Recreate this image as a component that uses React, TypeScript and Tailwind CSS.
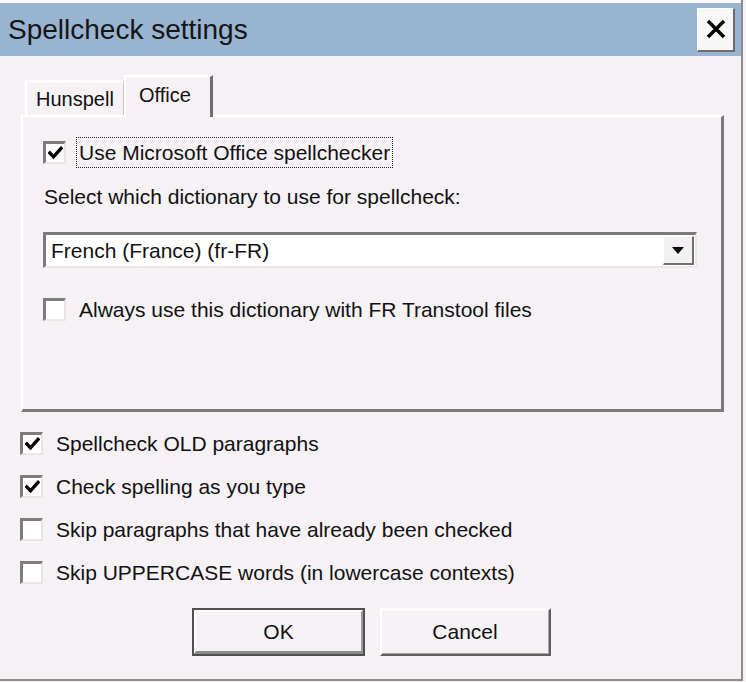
import React from "react";

function Check() {
  return (
    <svg width="15" height="14" viewBox="0 0 15 14">
      <path d="M1.8 7 L5.5 10.8 L13 2.5" fill="none" stroke="#000" strokeWidth="3.4" strokeLinecap="square" />
    </svg>
  );
}

function Box({ checked }: { checked?: boolean }) {
  return (
    <div className="w-[23px] h-[23px] shrink-0 border-t-[3px] border-l-[3px] border-r-2 border-b-2 border-t-[#7d7d7d] border-l-[#7d7d7d] border-r-[#e6e6e6] border-b-[#e6e6e6] bg-white flex items-center justify-center">
      {checked ? <Check /> : null}
    </div>
  );
}

function CheckRow({ checked, label, focus }: { checked?: boolean; label: string; focus?: boolean }) {
  return (
    <div className="flex items-center h-[32px]">
      <Box checked={checked} />
      {focus ? (
        <div className="ml-[10px] border border-dotted border-[#222] px-[2px] h-[31px] flex items-center">
          <span className="whitespace-nowrap">{label}</span>
        </div>
      ) : (
        <span className="ml-[13px] whitespace-nowrap">{label}</span>
      )}
    </div>
  );
}

export default function App() {
  return (
    <div className="w-[746px] h-[682px] bg-[#f5f1f5] overflow-hidden text-[21px] text-[#111] font-['Liberation_Sans',Arial,sans-serif] leading-none">
      <div className="w-[743px] h-[681px] border-r-2 border-b-2 border-r-[#8c8c8c] border-b-[#8c8c8c] flex flex-col">
        {/* title bar */}
        <div className="border-t-[3px] border-t-[#fbfbfb]">
          <div className="h-[53px] bg-[#99b4d1] flex items-center pl-[8px] pr-[6px]">
            <span className="text-[28px] text-[#151515]">Spellcheck settings</span>
            <div className="ml-auto w-[38px] h-[44px] bg-[#f7f7f7] border-t border-l border-t-white border-l-white border-r-2 border-b-2 border-r-[#6d6d6d] border-b-[#6d6d6d] flex items-center justify-center">
              <svg width="22" height="22" viewBox="0 0 22 22">
                <path d="M3 3 L19 19 M19 3 L3 19" stroke="#000" strokeWidth="3.4" />
              </svg>
            </div>
          </div>
        </div>

        {/* tabs */}
        <div className="mt-[19px] h-[40px] pl-[25px] flex items-start">
          <div className="mt-[5px] w-[99px] h-[35px] border-t-2 border-l-2 border-t-white border-l-white border-r border-r-[#c8c8c8] flex items-center pl-[9px] text-[20px]">
            Hunspell
          </div>
          <div className="relative z-10 w-[89px] h-[42px] bg-[#f5f1f5] border-t-2 border-l-2 border-t-white border-l-white border-r-[3px] border-r-[#6e6e6e] flex items-center pl-[13px] pb-[4px] text-[20px]">
            Office
          </div>
        </div>

        {/* panel */}
        <div className="ml-[21px] w-[703px] h-[297px] border-t-2 border-l-2 border-t-white border-l-white border-r-[3px] border-b-[3px] border-r-[#7a7a7a] border-b-[#7a7a7a] pl-[20px] pt-[19px] flex flex-col">
          <CheckRow checked focus label="Use Microsoft Office spellchecker" />
          <div className="mt-[16px] h-[24px] flex items-center pl-[1px] whitespace-nowrap">
            Select which dictionary to use for spellcheck:
          </div>
          <div className="mt-[24px] w-[654px] h-[36px] bg-white border-t-[3px] border-l-[3px] border-t-[#7a7a7a] border-l-[#7a7a7a] border-r-2 border-b-2 border-r-[#e8e8e8] border-b-[#e8e8e8] flex items-center">
            <span className="pl-[5px] whitespace-nowrap">French (France) (fr-FR)</span>
            <div className="ml-auto mr-[1px] w-[31px] h-[29px] bg-[#f2f0f2] border-t border-l border-t-white border-l-white border-r-2 border-b-2 border-r-[#6f6f6f] border-b-[#6f6f6f] flex items-center justify-center">
              <svg width="12" height="7" viewBox="0 0 12 7">
                <path d="M0 0 L12 0 L6 7 Z" fill="#000" />
              </svg>
            </div>
          </div>
          <div className="mt-[25px]">
            <CheckRow label="Always use this dictionary with FR Transtool files" />
          </div>
        </div>

        {/* options */}
        <div className="ml-[20px] mt-[10px] flex flex-col">
          <div className="h-[43px] flex items-center"><CheckRow checked label="Spellcheck OLD paragraphs" /></div>
          <div className="h-[43px] flex items-center"><CheckRow checked label="Check spelling as you type" /></div>
          <div className="h-[43px] flex items-center"><CheckRow label="Skip paragraphs that have already been checked" /></div>
          <div className="h-[43px] flex items-center"><CheckRow label="Skip UPPERCASE words (in lowercase contexts)" /></div>
        </div>

        {/* buttons */}
        <div className="mt-[14px] pl-[192px] flex gap-[15px]">
          <div className="w-[173px] h-[48px] border-2 border-[#4f4f4f] bg-[#f5f1f5]">
            <div className="w-full h-full border-t-2 border-l-2 border-t-white border-l-white border-r-2 border-b-[3px] border-r-[#9a9a9a] border-b-[#8a8a8a] flex items-center justify-center">
              OK
            </div>
          </div>
          <div className="w-[171px] h-[48px] border-t-2 border-l-2 border-t-white border-l-white border-r-2 border-b-2 border-r-[#5f5f5f] border-b-[#5f5f5f] bg-[#f5f1f5]">
            <div className="w-full h-full border-r border-b border-r-[#a8a8a8] border-b-[#a8a8a8] flex items-center justify-center">
              Cancel
            </div>
          </div>
        </div>
      </div>
    </div>
  );
}
